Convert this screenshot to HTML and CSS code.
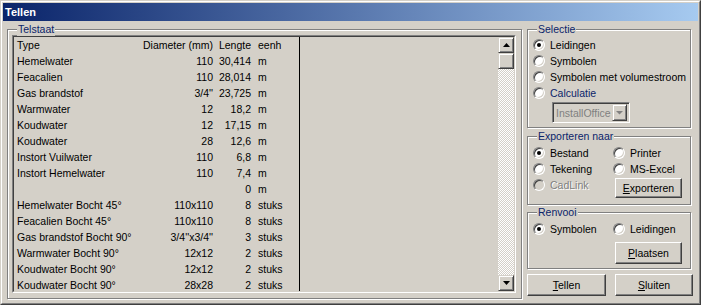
FILE: index.html
```html
<!DOCTYPE html>
<html lang="nl">
<head>
    <meta charset="UTF-8">
    <title>Tellen</title>
    <link rel="stylesheet" href="styles.css">
</head>
<body>

<div class="window">
  <div class="frame">
    <div class="titlebar">Tellen</div>

    <div class="content">
      <div class="group telstaat">
        <span class="legend">Telstaat</span>
        <div class="listbox">
          <div class="listinner">
            <div class="cols">
              <div class="row"><span>Type</span><span class="r">Diameter (mm)</span><span class="r">Lengte</span><span class="u">eenh</span></div>
              <div class="row"><span>Hemelwater</span><span class="r">110</span><span class="r">30,414</span><span class="u">m</span></div>
              <div class="row"><span>Feacalien</span><span class="r">110</span><span class="r">28,014</span><span class="u">m</span></div>
              <div class="row"><span>Gas brandstof</span><span class="r">3/4''</span><span class="r">23,725</span><span class="u">m</span></div>
              <div class="row"><span>Warmwater</span><span class="r">12</span><span class="r">18,2</span><span class="u">m</span></div>
              <div class="row"><span>Koudwater</span><span class="r">12</span><span class="r">17,15</span><span class="u">m</span></div>
              <div class="row"><span>Koudwater</span><span class="r">28</span><span class="r">12,6</span><span class="u">m</span></div>
              <div class="row"><span>Instort Vuilwater</span><span class="r">110</span><span class="r">6,8</span><span class="u">m</span></div>
              <div class="row"><span>Instort Hemelwater</span><span class="r">110</span><span class="r">7,4</span><span class="u">m</span></div>
              <div class="row"><span></span><span class="r"></span><span class="r">0</span><span class="u">m</span></div>
              <div class="row"><span>Hemelwater Bocht 45°</span><span class="r">110x110</span><span class="r">8</span><span class="u">stuks</span></div>
              <div class="row"><span>Feacalien Bocht 45°</span><span class="r">110x110</span><span class="r">8</span><span class="u">stuks</span></div>
              <div class="row"><span>Gas brandstof Bocht 90°</span><span class="r">3/4''x3/4''</span><span class="r">3</span><span class="u">stuks</span></div>
              <div class="row"><span>Warmwater Bocht 90°</span><span class="r">12x12</span><span class="r">2</span><span class="u">stuks</span></div>
              <div class="row"><span>Koudwater Bocht 90°</span><span class="r">12x12</span><span class="r">2</span><span class="u">stuks</span></div>
              <div class="row"><span>Koudwater Bocht 90°</span><span class="r">28x28</span><span class="r">2</span><span class="u">stuks</span></div>
            </div>
            <div class="blank"></div>
            <div class="scrollbar">
              <div class="sbtn"><svg width="7" height="4" viewBox="0 0 7 4"><path d="M3.5 0 L7 4 L0 4 Z" fill="#000"/></svg></div>
              <div class="sbtn"></div>
              <div class="track"></div>
              <div class="sbtn"><svg width="7" height="4" viewBox="0 0 7 4"><path d="M0 0 L7 0 L3.5 4 Z" fill="#000"/></svg></div>
            </div>
          </div>
        </div>
      </div>

      <div class="side">
        <div class="group selectie">
          <span class="legend">Selectie</span>
          <label class="radio checked"><span class="dot"></span>Leidingen</label>
          <label class="radio"><span class="dot"></span>Symbolen</label>
          <label class="radio"><span class="dot"></span>Symbolen met volumestroom</label>
          <label class="radio blue"><span class="dot"></span>Calculatie</label>
          <div class="combo">
            <span class="combo-text">InstallOffice</span>
            <span class="combo-btn"><svg width="7" height="5" viewBox="0 0 7 5"><path d="M0 1 L7 1 L3.5 4.5 Z" fill="#808080"/></svg></span>
          </div>
        </div>

        <div class="group export">
          <span class="legend">Exporteren naar</span>
          <div class="grid">
            <label class="radio checked"><span class="dot"></span>Bestand</label>
            <label class="radio"><span class="dot"></span>Printer</label>
            <label class="radio"><span class="dot"></span>Tekening</label>
            <label class="radio"><span class="dot"></span>MS-Excel</label>
            <label class="radio disabled"><span class="dot"></span>CadLink</label>
            <button class="btn btn-export"><u>E</u>xporteren</button>
          </div>
        </div>

        <div class="group renvooi">
          <span class="legend">Renvooi</span>
          <div class="grid">
            <label class="radio checked"><span class="dot"></span>Symbolen</label>
            <label class="radio"><span class="dot"></span>Leidingen</label>
          </div>
          <button class="btn btn-plaatsen"><u>P</u>laatsen</button>
        </div>

        <div class="actions">
          <button class="btn btn-tellen"><u>T</u>ellen</button>
          <button class="btn btn-sluiten"><u>S</u>luiten</button>
        </div>
      </div>
    </div>
  </div>
</div>

</body>
</html>
```

FILE: styles.css
```css
body {
    margin: 0;
    background: #d4d0c8;
    font-family: "Liberation Sans", Arial, sans-serif;
    font-size: 10.5px;
    color: #000;
}
.window {
    width: 701px;
    height: 305px;
    box-sizing: border-box;
    border: 1px solid;
    border-color: #d4d0c8 #404040 #404040 #d4d0c8;
    background: #d4d0c8;
}
.frame {
    height: 100%;
    box-sizing: border-box;
    border: 1px solid;
    border-color: #fff #808080 #808080 #fff;
    padding: 1px;
}
.titlebar {
    height: 18px;
    line-height: 18px;
    padding-left: 2px;
    background: linear-gradient(to right, #0a246a, #a6caf0);
    color: #fff;
    font-size: 11px;
    font-weight: bold;
}
.content {
    display: flex;
    padding: 8px 0 0 4px;
}

/* etched group boxes */
.group {
    position: relative;
    box-sizing: border-box;
    border: 1px solid #808080;
    box-shadow: 1px 1px 0 #fff, inset 1px 1px 0 #fff;
}
.legend {
    position: absolute;
    top: -7px;
    left: 9px;
    padding: 0 1px;
    line-height: 13px;
    background: #d4d0c8;
    color: #0a246a;
}
.telstaat {
    width: 515px;
    height: 270px;
    padding: 5px 0 0 4px;
}

/* list */
.listbox {
    width: 504px;
    height: 258px;
    box-sizing: border-box;
    border: 1px solid;
    border-color: #808080 #fff #fff #808080;
}
.listinner {
    height: 100%;
    box-sizing: border-box;
    border: 1px solid;
    border-color: #404040 #d4d0c8 #d4d0c8 #404040;
    display: flex;
    overflow: hidden;
}
.cols {
    width: 286px;
    box-sizing: border-box;
    border-right: 1px solid #000;
    flex-shrink: 0;
}
.row {
    display: grid;
    grid-template-columns: 120px 76px 38px 1fr;
    height: 16px;
    line-height: 16px;
    padding-left: 3px;
    white-space: nowrap;
}
.row .r {
    text-align: right;
}
.row .u {
    padding-left: 7px;
}
.blank {
    flex: 1;
}
.scrollbar {
    width: 16px;
    display: flex;
    flex-direction: column;
    flex-shrink: 0;
}
.sbtn {
    width: 16px;
    height: 16px;
    box-sizing: border-box;
    border: 1px solid;
    border-color: #d4d0c8 #404040 #404040 #d4d0c8;
    box-shadow: inset 1px 1px 0 #fff, inset -1px -1px 0 #808080;
    display: flex;
    align-items: center;
    justify-content: center;
    background: #d4d0c8;
}
.track {
    flex: 1;
    background: repeating-conic-gradient(#fff 0% 25%, #d4d0c8 0% 50%) 0 0 / 2px 2px;
}

/* right column */
.side {
    width: 166px;
    margin-left: 5px;
    display: flex;
    flex-direction: column;
}
.selectie {
    width: 164px;
    height: 99px;
    padding: 7px 0 0 5px;
}
.export {
    width: 164px;
    height: 69px;
    margin-top: 8px;
    padding: 8px 0 0 5px;
}
.renvooi {
    width: 164px;
    height: 57px;
    margin-top: 7px;
    padding: 8px 0 0 5px;
}
.grid {
    display: grid;
    grid-template-columns: 80px 1fr;
    grid-auto-rows: 16px;
}

/* radio buttons */
.radio {
    display: flex;
    align-items: center;
    gap: 5px;
    height: 16px;
    white-space: nowrap;
}
.dot {
    width: 12px;
    height: 12px;
    box-sizing: border-box;
    border-radius: 50%;
    border: 1px solid;
    border-color: #808080 #fff #fff #808080;
    box-shadow: inset 1px 1px 0 #404040, inset -1px -1px 0 #d4d0c8;
    background: #fff;
    display: grid;
    place-items: center;
    flex-shrink: 0;
}
.checked .dot::after {
    content: "";
    width: 4px;
    height: 4px;
    border-radius: 50%;
    background: #000;
}
.radio.blue {
    color: #0a246a;
}
.radio.disabled {
    color: #808080;
    text-shadow: 1px 1px 0 #fff;
}
.radio.disabled .dot {
    background: #d4d0c8;
}

/* combo */
.combo {
    width: 78px;
    height: 21px;
    margin: 1px 0 0 19px;
    box-sizing: border-box;
    border: 1px solid;
    border-color: #808080 #fff #fff #808080;
    box-shadow: inset 1px 1px 0 #404040, inset -1px -1px 0 #d4d0c8;
    padding: 2px;
    display: flex;
    align-items: center;
}
.combo-text {
    flex: 1;
    color: #808080;
    padding-left: 1px;
    white-space: nowrap;
    overflow: hidden;
}
.combo-btn {
    width: 15px;
    height: 17px;
    box-sizing: border-box;
    border: 1px solid;
    border-color: #d4d0c8 #404040 #404040 #d4d0c8;
    box-shadow: inset 1px 1px 0 #fff, inset -1px -1px 0 #808080;
    display: flex;
    align-items: center;
    justify-content: center;
    flex-shrink: 0;
}

/* push buttons */
.btn {
    font: inherit;
    color: #000;
    background: #d4d0c8;
    border: 1px solid;
    border-color: #fff #404040 #404040 #fff;
    box-shadow: inset -1px -1px 0 #808080, inset 1px 1px 0 #d4d0c8;
    padding: 0;
    box-sizing: border-box;
}
.btn-export {
    width: 67px;
    height: 20px;
    margin: 1px 0 0 2px;
}
.btn-plaatsen {
    width: 67px;
    height: 22px;
    margin: 5px 0 0 82px;
    display: block;
}
.actions {
    display: flex;
    justify-content: space-between;
    margin-top: 5px;
}
.btn-tellen {
    width: 79px;
    height: 22px;
}
.btn-sluiten {
    width: 78px;
    height: 22px;
}
```
